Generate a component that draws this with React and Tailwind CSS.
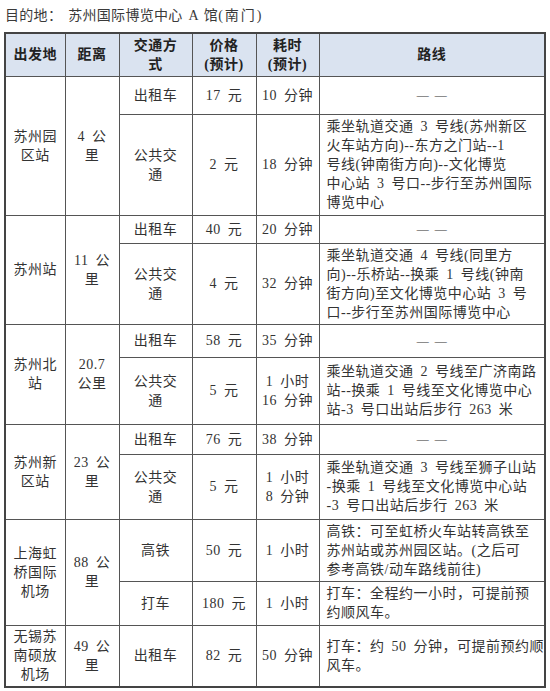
const font = { fontFamily: '"Liberation Serif", "Noto Sans CJK SC", serif' };

const td = "border border-[#555] text-center align-middle p-0";
const route = "border border-[#555] text-left align-middle pl-[7px] pr-[4px] py-[2px]";

const Lines = ({ lines }) =>
  lines.map((l, i) => (
    <span key={i} className="block whitespace-pre">
      {l}
    </span>
  ));

const Dash = () => <span className="text-[12px] tracking-[0px]">— —</span>;

export default function App() {
  return (
    <div
      className="w-[550px] h-[691px] bg-white text-[#333] text-[14px] leading-[19px] tracking-[0.5px] [word-spacing:3px] overflow-hidden"
      style={font}
    >
      <div className="pl-[5px] pt-[6px] h-[32px] text-[14px] text-[#3a3a3a] tracking-[0.3px] [word-spacing:2px]">
        目的地：<span className="ml-[6px]">苏州国际博览中心 A 馆</span>
        <span className="tracking-[2px]">(南门)</span>
      </div>
      <table className="ml-[4px] w-[540px] table-fixed border-collapse border-2 border-[#444]">
        <colgroup>
          <col className="w-[60px]" />
          <col className="w-[54px]" />
          <col className="w-[73px]" />
          <col className="w-[64px]" />
          <col className="w-[63px]" />
          <col className="w-[226px]" />
        </colgroup>
        <thead>
          <tr className="h-[43px] bg-[#dae3f0] font-bold text-[#222]">
            <th className={td}>出发地</th>
            <th className={td}>距离</th>
            <th className={td}><Lines lines={["交通方", "式"]} /></th>
            <th className={td}><Lines lines={["价格", "(预计)"]} /></th>
            <th className={td}><Lines lines={["耗时", "(预计)"]} /></th>
            <th className={td}>路线</th>
          </tr>
        </thead>
        <tbody>
          <tr className="h-[38px]">
            <td rowSpan={2} className={td}><Lines lines={["苏州园", "区站"]} /></td>
            <td rowSpan={2} className={td}><Lines lines={["4 公", "里"]} /></td>
            <td className={td}>出租车</td>
            <td className={td}>17 元</td>
            <td className={td}>10 分钟</td>
            <td className={td}><Dash /></td>
          </tr>
          <tr className="h-[101px]">
            <td className={td}><Lines lines={["公共交", "通"]} /></td>
            <td className={td}>2 元</td>
            <td className={td}>18 分钟</td>
            <td className={route}>
              <Lines lines={["乘坐轨道交通 3 号线(苏州新区", "火车站方向)--东方之门站--1", "号线(钟南街方向)--文化博览", "中心站 3 号口--步行至苏州国际", "博览中心"]} />
            </td>
          </tr>
          <tr className="h-[28px]">
            <td rowSpan={2} className={td}>苏州站</td>
            <td rowSpan={2} className={td}><Lines lines={["11 公", "里"]} /></td>
            <td className={td}>出租车</td>
            <td className={td}>40 元</td>
            <td className={td}>20 分钟</td>
            <td className={td}><Dash /></td>
          </tr>
          <tr className="h-[80px]">
            <td className={td}><Lines lines={["公共交", "通"]} /></td>
            <td className={td}>4 元</td>
            <td className={td}>32 分钟</td>
            <td className={route}>
              <Lines lines={["乘坐轨道交通 4 号线(同里方", "向)--乐桥站--换乘 1 号线(钟南", "街方向)至文化博览中心站 3 号", "口--步行至苏州国际博览中心"]} />
            </td>
          </tr>
          <tr className="h-[33px]">
            <td rowSpan={2} className={td}><Lines lines={["苏州北", "站"]} /></td>
            <td rowSpan={2} className={td}><Lines lines={["20.7", "公里"]} /></td>
            <td className={td}>出租车</td>
            <td className={td}>58 元</td>
            <td className={td}>35 分钟</td>
            <td className={td}><Dash /></td>
          </tr>
          <tr className="h-[67px]">
            <td className={td}><Lines lines={["公共交", "通"]} /></td>
            <td className={td}>5 元</td>
            <td className={td}><Lines lines={["1 小时", "16 分钟"]} /></td>
            <td className={route}>
              <Lines lines={["乘坐轨道交通 2 号线至广济南路", "站--换乘 1 号线至文化博览中心", "站-3 号口出站后步行 263 米"]} />
            </td>
          </tr>
          <tr className="h-[30px]">
            <td rowSpan={2} className={td}><Lines lines={["苏州新", "区站"]} /></td>
            <td rowSpan={2} className={td}><Lines lines={["23 公", "里"]} /></td>
            <td className={td}>出租车</td>
            <td className={td}>76 元</td>
            <td className={td}>38 分钟</td>
            <td className={td}><Dash /></td>
          </tr>
          <tr className="h-[65px]">
            <td className={td}><Lines lines={["公共交", "通"]} /></td>
            <td className={td}>5 元</td>
            <td className={td}><Lines lines={["1 小时", "8 分钟"]} /></td>
            <td className={route}>
              <Lines lines={["乘坐轨道交通 3 号线至狮子山站", "-换乘 1 号线至文化博览中心站", "-3 号口出站后步行 263 米"]} />
            </td>
          </tr>
          <tr className="h-[62px]">
            <td rowSpan={2} className={td}><Lines lines={["上海虹", "桥国际", "机场"]} /></td>
            <td rowSpan={2} className={td}><Lines lines={["88 公", "里"]} /></td>
            <td className={td}>高铁</td>
            <td className={td}>50 元</td>
            <td className={td}>1 小时</td>
            <td className={route}>
              <Lines lines={["高铁：可至虹桥火车站转高铁至", "苏州站或苏州园区站。(之后可", "参考高铁/动车路线前往)"]} />
            </td>
          </tr>
          <tr className="h-[44px]">
            <td className={td}>打车</td>
            <td className={td}>180 元</td>
            <td className={td}>1 小时</td>
            <td className={route}>
              <Lines lines={["打车：全程约一小时，可提前预", "约顺风车。"]} />
            </td>
          </tr>
          <tr className="h-[62px]">
            <td className={td}><Lines lines={["无锡苏", "南硕放", "机场"]} /></td>
            <td className={td}><Lines lines={["49 公", "里"]} /></td>
            <td className={td}>出租车</td>
            <td className={td}>82 元</td>
            <td className={td}>50 分钟</td>
            <td className={route}>
              <Lines lines={["打车：约 50 分钟，可提前预约顺", "风车。"]} />
            </td>
          </tr>
        </tbody>
      </table>
    </div>
  );
}
